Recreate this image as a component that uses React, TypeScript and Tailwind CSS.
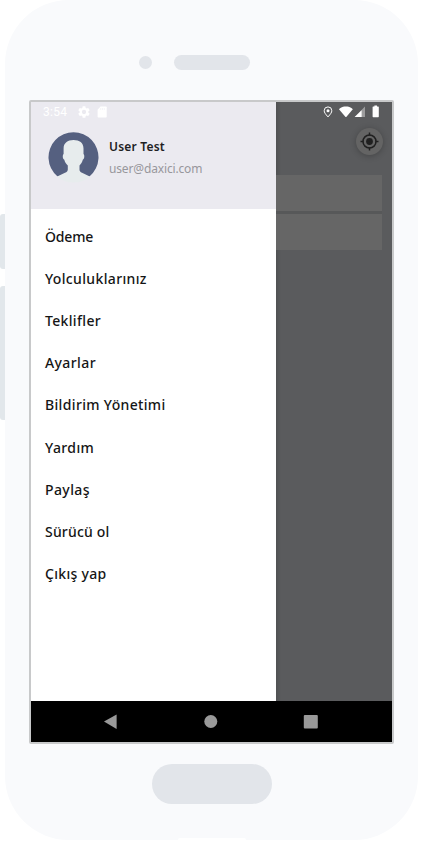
const menuItems = [
  { label: 'Ödeme', spacing: 'tracking-[-0.15px]' },
  { label: 'Yolculuklarınız', spacing: 'tracking-[0.35px]' },
  { label: 'Teklifler', spacing: 'tracking-[0.33px]' },
  { label: 'Ayarlar', spacing: 'tracking-[0.4px]' },
  { label: 'Bildirim Yönetimi', spacing: 'tracking-[0.34px]' },
  { label: 'Yardım', spacing: 'tracking-[0.4px]' },
  { label: 'Paylaş', spacing: 'tracking-[0.4px]' },
  { label: 'Sürücü ol', spacing: 'tracking-[0.18px]' },
  { label: 'Çıkış yap', spacing: 'tracking-[0.3px]' },
];

function Avatar() {
  return (
    <svg className="h-[51px] w-[51px] shrink-0" viewBox="0 0 51 51">
      <path
        d="M9.300 44.300A25 25 0 1 1 41.700 44.300z"
        fill="#556080"
      />
      <path
        d="M25.500 8c6 0 10 2.800 10 8.500v5.500c1.300 1 1 5-.7 5.800-.6 2.500-1.800 4.400-3.300 5.700v4.300c0 1.600 1 2.300 2.500 3l7.800 3.600C37.500 48.500 32 50.500 25.500 50.500S13.500 48.500 9.200 44.400l7.800-3.600c1.800-.9 2.800-1.700 2.800-3.300v-4c-1.600-1.300-2.900-3.400-3.500-5.700-1.700-.8-2-4.800-.7-5.800v-5.500C15.600 11 19.500 8 25.500 8z"
        fill="#e7eced"
      />
    </svg>
  );
}

function StatusLeft() {
  return (
    <div className="flex h-[21px] items-center pl-[12px] text-[12px] text-white">
      <span className="w-[35px] font-[Roboto,sans-serif] tracking-[0.3px]">3:54</span>
      <svg className="h-[12px] w-[12px]" viewBox="2 2 20 20" fill="currentColor">
        <path d="M19.140 12.940c.04-.3.060-.610.060-.940s-.020-.640-.070-.940l2.030-1.580a.49.49 0 0 0 .120-.610l-1.920-3.320a.488.488 0 0 0-.590-.220l-2.390.960a7.030 7.030 0 0 0-1.620-.940l-.360-2.540A.484.484 0 0 0 13.920 2.400h-3.840a.48.48 0 0 0-.470.410l-.360 2.540c-.590.240-1.130.570-1.620.940l-2.390-.960a.48.48 0 0 0-.590.220L2.740 8.870a.48.48 0 0 0 .120.610l2.030 1.580c-.050.300-.090.630-.090.940s.020.640.070.940l-2.030 1.580a.49.49 0 0 0-.120.610l1.920 3.320c.120.220.370.290.590.220l2.390-.960c.5.380 1.030.7 1.620.940l.360 2.540c.050.240.240.410.480.410h3.840c.240 0 .440-.170.470-.410l.360-2.540a6.900 6.900 0 0 0 1.620-.940l2.390.960c.220.080.470 0 .590-.220l1.920-3.320a.48.48 0 0 0-.120-.610zM12 15.600a3.600 3.600 0 1 1 0-7.200 3.600 3.600 0 0 1 0 7.200z" />
      </svg>
      <svg className="ml-[7px] h-[12px] w-[10px]" viewBox="0 0 10 12">
        <path d="M3.500.5H9q.7 0 .7.700v9.600q0 .7-.7.700H1.300q-.7 0-.7-.7V3.700z" fill="white" />
        <path d="M3.700 2v2M5.500 2v2M7.300 2v2" stroke="#ebeaf0" strokeWidth=".5" />
      </svg>
    </div>
  );
}

function StatusRight() {
  return (
    <svg className="h-[20px] w-[116px]" viewBox="0 0 116 20" fill="white">
      <path
        d="M52 14.900c-2.700-3-3.800-4.500-3.800-6.200a3.800 3.800 0 0 1 7.600 0c0 1.700-1.100 3.200-3.800 6.200z"
        fill="none"
        stroke="white"
        strokeWidth="1"
      />
      <circle cx="52" cy="8.700" r="1.500" />
      <path d="M63.200 7.500c-.5-.7 2.700-3 6.700-3s7.200 2.300 6.700 3l-6.100 7.300q-.6.600-1.200 0z" />
      <path d="M89 4.500v10.500H78.700z" opacity=".4" />
      <path d="M85.600 8.200v6.800h-6.900z" />
      <path d="M97.200 4.500h1.200V3.500h2.600v1h1.200q.6 0 .6.600v9.500q0 .6-.6.600h-5q-.6 0-.6-.6V5.100q0-.6.6-.6z" />
    </svg>
  );
}

function LocateButton() {
  return (
    <button className="mr-[9px] flex h-[27px] w-[27px] items-center justify-center self-end rounded-full bg-[#646464] shadow-[0_1px_6px_rgba(0,0,0,0.25)]">
      <svg className="h-[19px] w-[19px]" viewBox="0 0 19 19" fill="none" stroke="#202020" strokeWidth="1.500">
        <circle cx="9.500" cy="9.500" r="6.500" />
        <circle cx="9.500" cy="9.500" r="3.400" fill="#202020" stroke="none" />
        <path d="M9.500.5v3M9.500 15.500v3M.5 9.500h3M15.500 9.500h3" />
      </svg>
    </button>
  );
}

function Drawer() {
  return (
    <aside className="flex w-[245px] flex-col bg-white">
      <header className="h-[107px] bg-[#ebeaf0]">
        <StatusLeft />
        <div className="flex pt-[9px] pl-[17px]">
          <Avatar />
          <div className="pt-[6px] pl-[10px] whitespace-nowrap">
            <div className="text-[12px] leading-[18px] font-semibold tracking-[0.2px] text-[#202022]">User Test</div>
            <div className="mt-[4px] text-[12px] leading-[18px] tracking-[-0.15px] text-[#98979c]">user@daxici.com</div>
          </div>
        </div>
      </header>
      <nav className="flex flex-col pt-[7px] pl-[14px]">
        {menuItems.map((item) => (
          <a key={item.label} className="flex h-[42.100px] items-center text-[14px] font-medium whitespace-nowrap text-[#151515]">
            <span className={item.spacing}>{item.label}</span>
          </a>
        ))}
      </nav>
    </aside>
  );
}

function NavigationBar() {
  return (
    <footer className="flex h-[41px] bg-black">
      <svg className="h-[41px] w-[361px]" viewBox="0 0 361 41" fill="#999">
        <path d="M73 20.500 85.600 13.500v14.500z" />
        <circle cx="179.800" cy="20.500" r="6.500" />
        <rect x="272.800" y="14" width="14" height="13.500" rx="1" />
      </svg>
    </footer>
  );
}

export default function App() {
  return (
    <div className="flex h-[841px] w-[423px] overflow-hidden bg-white font-['Noto_Sans','Open_Sans',sans-serif]">
      <div className="flex w-[5px] shrink-0 flex-col gap-[17px] pt-[214px]">
        <div className="h-[55px] rounded-l-[3px] bg-[#e2e7eb]" />
        <div className="h-[134px] rounded-l-[3px] bg-[#e2e7eb]" />
      </div>
      <div className="flex h-[840px] w-[413px] shrink-0 flex-col rounded-[64px] bg-[#f9fafc]">
        <div className="flex h-[99.500px] shrink-0 pt-[55px] pl-[134px]">
          <div className="mt-[1px] h-[12.500px] w-[12.500px] rounded-full bg-[#e2e5ea]" />
          <div className="ml-[22.500px] h-[15px] w-[76px] rounded-full bg-[#e2e5ea]" />
        </div>
        <main className="ml-[24px] flex h-[644px] w-[365px] shrink-0 flex-col rounded-[2px] border-2 border-[#c8c9ca]">
          <div className="flex min-h-0 flex-1">
            <Drawer />
            <section className="flex flex-1 flex-col bg-[linear-gradient(to_right,#505153,#5a5b5d_5px)]">
              <StatusRight />
              <div className="flex h-[53px] flex-col pt-[6px]">
                <LocateButton />
              </div>
              <div className="mr-[10px] h-[36px] bg-[#666]" />
              <div className="mr-[10px] h-[3px] bg-[#575859]" />
              <div className="mr-[10px] h-[36px] bg-[#666]" />
            </section>
          </div>
          <NavigationBar />
        </main>
        <div className="flex flex-1 flex-col items-center justify-between pt-[20px]">
          <div className="h-[40px] w-[120px] rounded-full bg-[#e2e5ea]" />
          <div className="h-[2px] w-[68px] rounded-t-[2px] bg-white" />
        </div>
      </div>
    </div>
  );
}
